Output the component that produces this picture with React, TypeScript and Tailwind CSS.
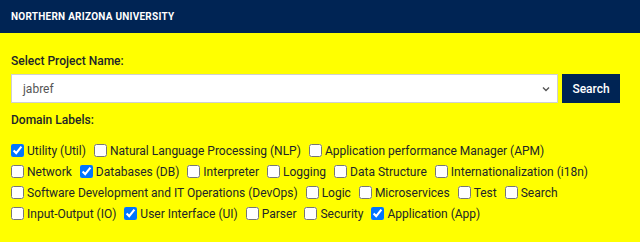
import React from "react";

const rows: [string, boolean][][] = [
  [
    ["Utility (Util)", true],
    ["Natural Language Processing (NLP)", false],
    ["Application performance Manager (APM)", false],
  ],
  [
    ["Network", false],
    ["Databases (DB)", true],
    ["Interpreter", false],
    ["Logging", false],
    ["Data Structure", false],
    ["Internationalization (i18n)", false],
  ],
  [
    ["Software Development and IT Operations (DevOps)", false],
    ["Logic", false],
    ["Microservices", false],
    ["Test", false],
    ["Search", false],
  ],
  [
    ["Input-Output (IO)", false],
    ["User Interface (UI)", true],
    ["Parser", false],
    ["Security", false],
    ["Application (App)", true],
  ],
];

export default function App() {
  return (
    <div
      className="w-[640px] h-[242px] bg-[#ffff00] text-[#212529]"
      style={{ fontFamily: "Roboto, 'Liberation Sans', sans-serif" }}
    >
      <div className="h-[33px] bg-[#002454] flex items-center px-[11px]">
        <span className="text-white text-[10px] font-bold leading-none tracking-[0.25px]">
          NORTHERN ARIZONA UNIVERSITY
        </span>
      </div>
      <div className="px-[11px] pt-[21px]">
        <div className="text-[12px] font-medium leading-[14px]">Select Project Name:</div>
        <div className="flex gap-[4px] mt-[6px] w-[609px]">
          <div className="flex-1 h-[29px] bg-white border border-[#d0d0d0] flex items-center justify-between pl-[11px] pr-[6px]">
            <span className="text-[12px] text-[#555]">jabref</span>
            <svg width="10" height="10" viewBox="0 0 10 10">
              <path d="M2 3.5 L5 6.5 L8 3.5" fill="none" stroke="#555" strokeWidth="1.4" />
            </svg>
          </div>
          <button className="w-[58px] h-[29px] bg-[#002454] text-white text-[12px] font-medium">
            Search
          </button>
        </div>
        <div className="text-[12px] font-medium leading-[14px] mt-[10px]">Domain Labels:</div>
        <div className="mt-[13px] flex flex-col">
          {rows.map((row, i) => (
            <div key={i} className="flex items-center gap-[8px] h-[21px]">
              {row.map(([label, checked]) => (
                <label key={label} className="flex items-center gap-[3px] text-[12px]">
                  <input
                    type="checkbox"
                    defaultChecked={checked}
                    className="w-[13px] h-[13px] m-0"
                  />
                  <span>{label}</span>
                </label>
              ))}
            </div>
          ))}
        </div>
      </div>
    </div>
  );
}
